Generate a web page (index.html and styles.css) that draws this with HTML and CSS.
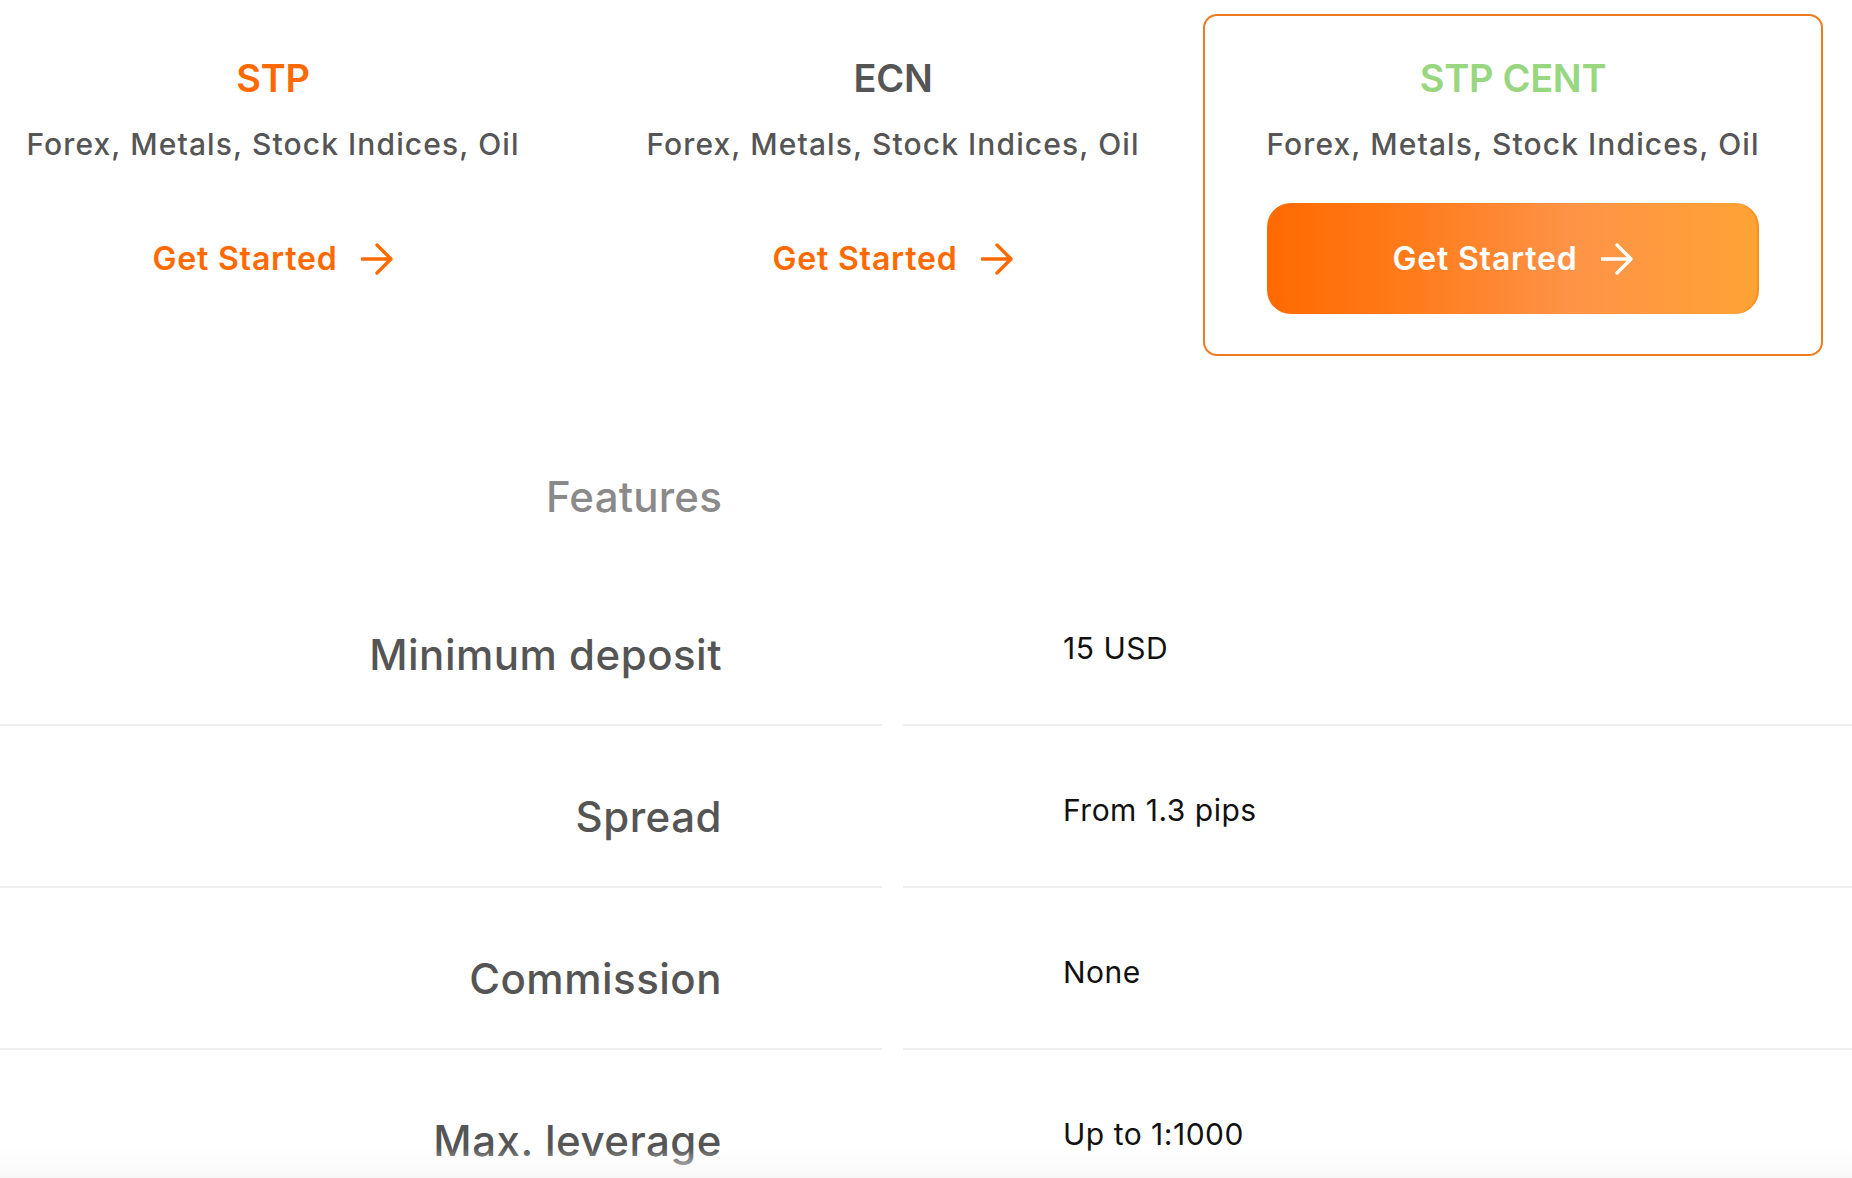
FILE: index.html
```html
<!DOCTYPE html>
<html lang="en">
<head>
<meta charset="utf-8">
<title>Account types</title>
<link rel="stylesheet" href="styles.css">
</head>
<body>
<main class="page">
  <section class="plans">
    <div class="plan">
      <h2 class="plan-title title-stp">STP</h2>
      <p class="plan-sub">Forex, Metals, Stock Indices, Oil</p>
      <a class="cta" href="#">
        <span>Get Started</span>
        <svg class="arrow" viewBox="0 0 32 32" aria-hidden="true"><path d="M1 16H30M16 2L30 16L16 30"/></svg>
      </a>
    </div>
    <div class="plan">
      <h2 class="plan-title title-ecn">ECN</h2>
      <p class="plan-sub">Forex, Metals, Stock Indices, Oil</p>
      <a class="cta" href="#">
        <span>Get Started</span>
        <svg class="arrow" viewBox="0 0 32 32" aria-hidden="true"><path d="M1 16H30M16 2L30 16L16 30"/></svg>
      </a>
    </div>
    <div class="plan plan-active">
      <h2 class="plan-title title-cent">STP CENT</h2>
      <p class="plan-sub">Forex, Metals, Stock Indices, Oil</p>
      <a class="cta cta-filled" href="#">
        <span>Get Started</span>
        <svg class="arrow" viewBox="0 0 32 32" aria-hidden="true"><path d="M1 16H30M16 2L30 16L16 30"/></svg>
      </a>
    </div>
  </section>

  <section class="features">
    <div class="features-head">Features</div>
    <div class="table">
      <div class="cell label">Minimum deposit</div>
      <div class="cell value">15 USD</div>
      <div class="cell label">Spread</div>
      <div class="cell value">From 1.3 pips</div>
      <div class="cell label">Commission</div>
      <div class="cell value">None</div>
      <div class="cell label">Max. leverage</div>
      <div class="cell value">Up to 1:1000</div>
    </div>
  </section>
  <div class="fade"></div>
</main>
</body>
</html>
```

FILE: styles.css
```css
* { box-sizing: border-box; }

html, body {
  margin: 0;
  padding: 0;
  background: #ffffff;
  overflow: hidden;
}

body {
  font-family: Inter, "Noto Sans", "Liberation Sans", sans-serif;
  color: #555555;
}

.page {
  width: 1852px;
}

/* ---------- plans ---------- */
.plans {
  display: grid;
  grid-template-columns: repeat(3, 620px);
  margin-left: -37px;
  padding-top: 14px;
}

.plan {
  height: 342px;
  padding: 0 62px;
  border: 2px solid transparent;
  border-radius: 14px;
  text-align: center;
  display: flex;
  flex-direction: column;
  align-items: center;
}

.plan-active {
  border-color: #f07b1f;
}

.plan-title {
  margin: 38px 0 0;
  font-size: 38px;
  line-height: 48px;
  font-weight: 600;
  letter-spacing: -0.3px;
}

.title-stp { color: #ff6a00; }
.title-ecn { color: #555555; }
.title-cent { color: #99d680; }

.plan-sub {
  margin: 22px 0 0;
  font-size: 30px;
  line-height: 40px;
  font-weight: 500;
  letter-spacing: 1.1px;
  color: #555555;
  white-space: nowrap;
}

.cta {
  margin-top: 39px;
  width: 100%;
  height: 111px;
  display: flex;
  align-items: center;
  justify-content: center;
  gap: 24px;
  text-decoration: none;
  color: #ff6a00;
  font-size: 32px;
  font-weight: 600;
  letter-spacing: 0.8px;
  border-radius: 24px;
}

.cta-filled {
  color: #ffffff;
  background: linear-gradient(90deg, #ff6a00 0%, #ff7c1c 30%, #fe9347 62%, #ffa334 100%);
  box-shadow: inset -2px 0 0 rgba(230, 110, 10, 0.35);
}

.arrow {
  width: 32px;
  height: 32px;
  fill: none;
  stroke: currentColor;
  stroke-width: 3.4;
  stroke-linecap: round;
  stroke-linejoin: round;
  flex: none;
}

/* ---------- features ---------- */
.features-head {
  width: 882px;
  margin-top: 115px;
  padding-right: 160px;
  text-align: right;
  font-size: 42px;
  line-height: 52px;
  font-weight: 500;
  letter-spacing: 0.2px;
  color: #8a8a8a;
}

.table {
  margin-top: 41px;
  display: grid;
  grid-template-columns: 882px 1fr;
  column-gap: 21px;
}

.cell {
  height: 162px;
  border-bottom: 2px solid #efefef;
}

.label {
  padding: 65px 160px 0 0;
  text-align: right;
  font-size: 42px;
  line-height: 52px;
  font-weight: 500;
  letter-spacing: 0.5px;
  color: #555555;
}

.value {
  padding: 64px 0 0 160px;
  font-size: 30px;
  line-height: 40px;
  font-weight: 400;
  letter-spacing: 0.5px;
  color: #111111;
}

.fade {
  position: fixed;
  left: 0;
  right: 0;
  bottom: 0;
  height: 30px;
  background: linear-gradient(180deg, rgba(248, 248, 248, 0) 0%, rgba(246, 246, 246, 0.8) 100%);
  pointer-events: none;
}
```
